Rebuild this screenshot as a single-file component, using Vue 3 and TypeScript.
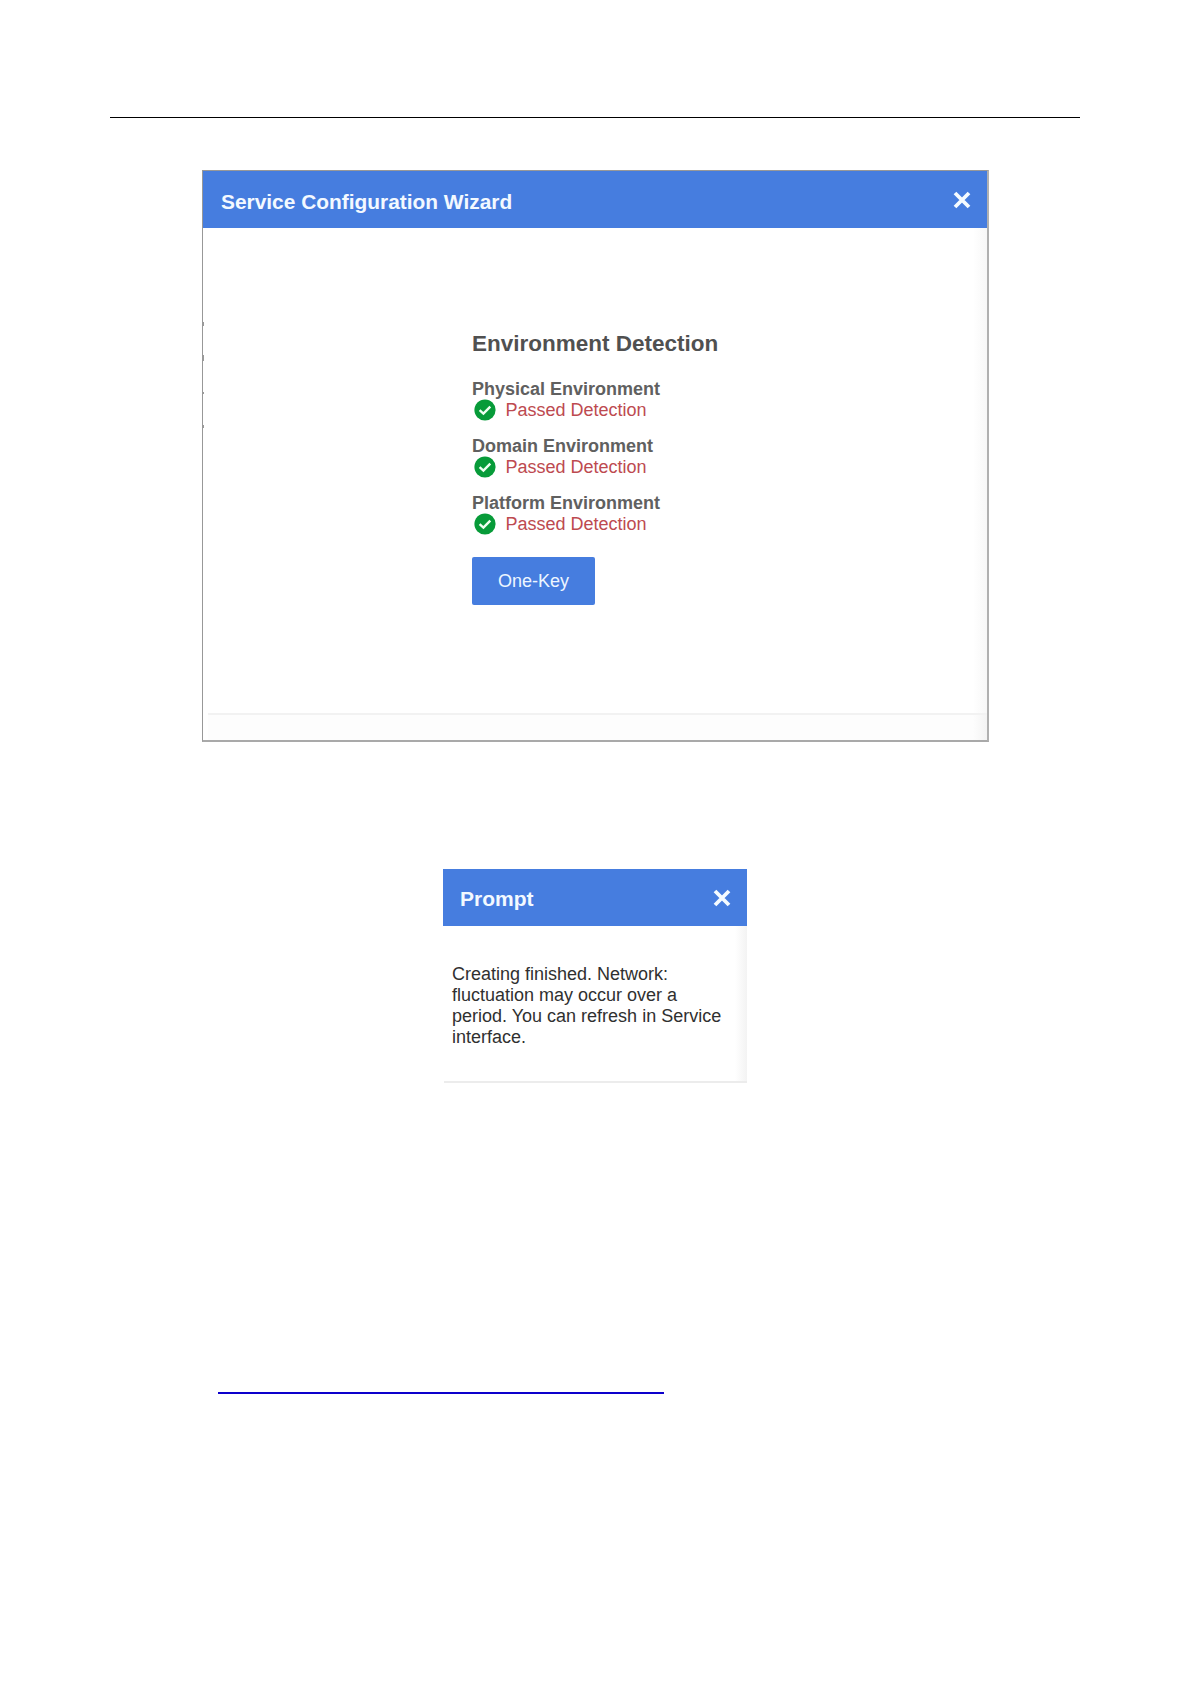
<script setup lang="ts">
  type Check = {
    name: string
    result: string
  }

  const checks: Check[] = [
    { name: 'Physical Environment', result: 'Passed Detection' },
    { name: 'Domain Environment', result: 'Passed Detection' },
    { name: 'Platform Environment', result: 'Passed Detection' },
  ]

  const message: string[] = [
    'Creating finished. Network:',
    'fluctuation may occur over a',
    'period. You can refresh in Service',
    'interface.',
  ]
</script>

<template>
  <main class="page">
    <hr class="rule" />

    <section class="wizard">
      <header class="header">
        <h1 class="title">Service Configuration Wizard</h1>
        <svg class="close" viewBox="0 0 18 18">
          <path d="M2 2 16 16M16 2 2 16" />
        </svg>
      </header>
      <div class="wizard-body">
        <h2 class="heading">Environment Detection</h2>
        <div class="check" v-for="check in checks" :key="check.name">
          <div class="name">{{ check.name }}</div>
          <div class="result">
            <svg class="tick" viewBox="0 0 22 22">
              <circle cx="11" cy="11" r="10.6" />
              <path d="M5.6 11.2 9.4 14.6 16.3 7.6" />
            </svg>
            <span>{{ check.result }}</span>
          </div>
        </div>
        <button class="button">One-Key</button>
      </div>
      <footer class="wizard-footer"></footer>
      <i class="mark first"></i>
      <i class="mark second"></i>
      <i class="mark third"></i>
      <i class="mark fourth"></i>
    </section>

    <section class="prompt">
      <header class="header">
        <h1 class="title">Prompt</h1>
        <svg class="close" viewBox="0 0 18 18">
          <path d="M2 2 16 16M16 2 2 16" />
        </svg>
      </header>
      <div class="prompt-body">
        <div v-for="line in message" :key="line">{{ line }}</div>
      </div>
    </section>

    <div class="link"></div>
  </main>
</template>

<style>
body {
  background-color: white;
}
</style>

<style scoped>
.page {
  box-sizing: border-box;
  display: flex;
  flex-direction: column;
  width: 1191px;
  height: 1684px;
  padding: 117px 111px 0 110px;
  font-family: "Liberation Sans", Arial, sans-serif;
  font-size: 18px;
  line-height: 21px;
}

.rule {
  width: 970px;
  height: 1px;
  margin: 0;
  border: none;
  background-color: black;
}

.header {
  display: flex;
  align-items: center;
  justify-content: space-between;
  box-sizing: border-box;
  background-color: #467ddf;
}

.title {
  margin: 0;
  font-size: 20.9px;
  line-height: 24px;
  color: #f3f9ff;
}

.close {
  width: 18px;
  height: 18px;
  overflow: visible;
  fill: none;
  stroke: #f5fbff;
  stroke-width: 3.8;
}

.wizard {
  position: relative;
  box-sizing: border-box;
  display: flex;
  flex-direction: column;
  width: 787px;
  height: 572px;
  margin: 52px 0 0 92px;
  border: 1px solid #989898;
  border-bottom: 2px solid #a9a9a9;
  border-right: 2px solid #b0b0b0;
}

.wizard .header {
  height: 57px;
  padding: 4px 16px 0 18px;
}

.wizard .close {
  margin-bottom: 4px;
}

.wizard-body {
  box-sizing: border-box;
  height: 485px;
  padding: 102px 0 0 269px;
  background: linear-gradient(to left, #f7f7f7, white 14px);
}

.heading {
  margin: 0 0 21px;
  font-size: 22.5px;
  line-height: 28px;
  color: #505050;
}

.check {
  margin-bottom: 15px;
}

.name {
  font-weight: bold;
  color: #606060;
}

.result {
  display: flex;
  align-items: center;
  gap: 9px;
  height: 21px;
  padding-left: 2.4px;
  color: #bd4a50;
}

.tick {
  width: 22px;
  height: 22px;
  margin-bottom: 1px;
}

.tick circle {
  fill: #079b39;
}

.tick path {
  fill: none;
  stroke: #effff1;
  stroke-width: 2.4;
}

.button {
  width: 123px;
  height: 48px;
  margin-top: 7px;
  padding: 0;
  border: none;
  border-radius: 2px;
  background-color: #467ddf;
  font: inherit;
  color: #edf6ff;
}

.wizard-footer {
  flex: 1;
  margin-left: 5px;
  border-top: 2px solid #f2f2f2;
  background: linear-gradient(to left, #f3f3f3, transparent 14px), #fdfdfd;
}

/* traces of the page behind the dialog's left edge */
.mark {
  position: absolute;
  left: -1px;
  width: 2px;
  height: 4px;
  background-color: #999999;
}

.first {
  top: 151px;
}

.second {
  top: 184px;
  height: 6px;
}

.third {
  top: 221px;
  height: 2px;
}

.fourth {
  top: 254px;
  height: 3px;
}

.prompt {
  width: 304px;
  margin: 127px 0 0 333px;
}

.prompt .header {
  height: 57px;
  padding: 3px 16px 0 17px;
}

.prompt .title {
  font-size: 21px;
}

.prompt .close {
  margin-bottom: 3px;
}

.prompt-body {
  box-sizing: border-box;
  width: 303px;
  height: 157px;
  margin-left: 1px;
  padding: 38px 0 0 8px;
  border-bottom: 2px solid #ececec;
  background: linear-gradient(to left, #f3f3f3, white 12px);
  line-height: 21.1px;
  color: #303030;
  white-space: nowrap;
}

.link {
  width: 446px;
  height: 2px;
  margin: 309px 0 0 108px;
  background-color: #0d00cc;
}
</style>
